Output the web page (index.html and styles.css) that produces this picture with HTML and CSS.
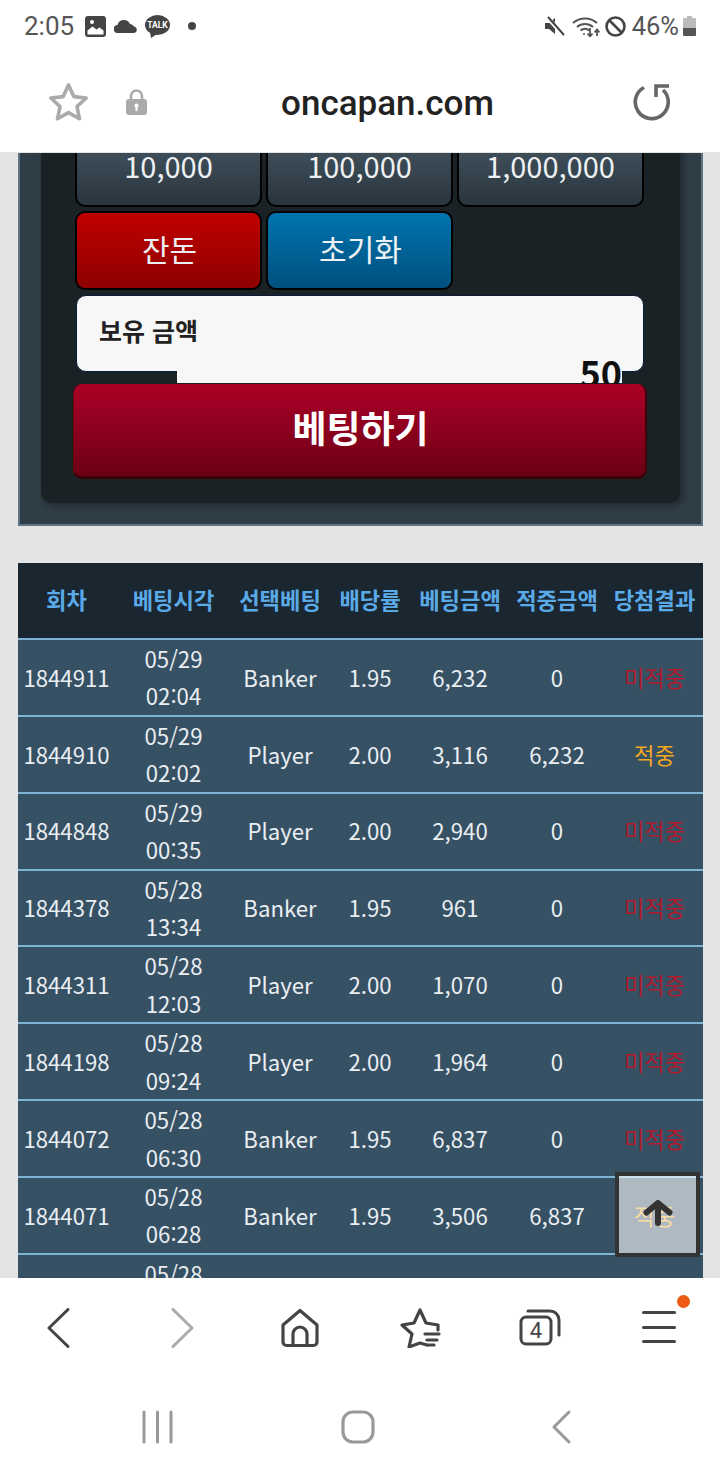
FILE: index.html
```html
<!DOCTYPE html>
<html lang="ko">
<head>
<meta charset="utf-8">
<title>oncapan.com</title>
<link rel="stylesheet" href="styles.css">
</head>
<body>
<div class="phone">
  <header class="status">
    <div class="status-left">
      <span class="status-time">2:05</span>
      <svg class="ic-image" viewBox="0 0 21 21"><rect width="21" height="21" rx="3" fill="#444"/><path d="M2.500 18.500v-4l5-4 4 3 3-2 4 3v4z" fill="#fff"/><circle cx="7" cy="6" r="2" fill="#fff"/></svg>
      <svg class="ic-cloud" viewBox="0 0 24 13"><path d="M4 13a4 4 0 0 1-.5-8A6 6 0 0 1 10 0a7 7 0 0 1 6 4 4.600 4.600 0 0 1 4 2.500 3.300 3.300 0 0 1 0 6.500z" fill="#444"/></svg>
      <svg class="ic-talk" viewBox="0 0 25 23"><ellipse cx="12.500" cy="10" rx="12.500" ry="10" fill="#444"/><path d="M5 17l1 6 6-4z" fill="#444"/><text x="12.500" y="13" text-anchor="middle" class="talk-text">TALK</text></svg>
      <span class="status-dot"></span>
    </div>
    <div class="status-right">
      <svg class="ic-mute" viewBox="0 0 20 20"><path d="M0 7h4l6-5v16l-6-5H0z" fill="#444"/><path d="M2 1l16 18" stroke="#fff" stroke-width="4"/><path d="M3 1l16 18" stroke="#444" stroke-width="2"/></svg>
      <svg class="ic-wifi" viewBox="0 0 28 21" fill="none" stroke="#555" stroke-width="2"><path d="M1 7a18 18 0 0 1 24 0"/><path d="M5 11a12 12 0 0 1 16 0"/><path d="M8.500 14.500a7 7 0 0 1 9 0"/><circle cx="12" cy="18" r="1" fill="#555" stroke="none"/><path d="M18 12v8M15.500 17.500l2.500 3 2.500-3M25 20v-6M22.500 16.500l2.500-3 2.500 3" stroke-width="1.800"/></svg>
      <svg class="ic-block" viewBox="0 0 21 21" fill="none" stroke="#444" stroke-width="2.600"><circle cx="10.500" cy="10.500" r="9"/><path d="M4 4l13 13"/></svg>
      <span class="status-batt">46%</span>
      <svg class="ic-batt" viewBox="0 0 13 20"><path d="M4 0h5v2h3a1 1 0 0 1 1 1v5H0V3a1 1 0 0 1 1-1h3z" fill="#bbb"/><rect y="8" width="13" height="4" fill="#bbb"/><path d="M0 12h13v7a1 1 0 0 1-1 1H1a1 1 0 0 1-1-1z" fill="#555"/></svg>
    </div>
  </header>

  <div class="addr">
    <svg class="ic-star" viewBox="0 0 41 40"><path d="M20.500 3l5.300 11.600 12.400 1.400-9.200 8.500 2.500 12.300-11-6.200-11 6.200 2.500-12.300L2.800 16l12.400-1.400z" fill="none" stroke="#aaa" stroke-width="3.600" stroke-linejoin="round"/></svg>
    <svg class="ic-lock" viewBox="0 0 21 26"><path d="M5 12V7a5.500 5.500 0 0 1 11 0v5" fill="none" stroke="#aaa" stroke-width="2.600"/><rect y="10" width="21" height="16" rx="3" fill="#aaa"/><circle cx="10.500" cy="16.500" r="2" fill="#fff"/><rect x="9.500" y="17" width="2" height="5" fill="#fff"/></svg>
    <div class="url">oncapan.com</div>
    <svg class="ic-reload" viewBox="0 0 38 38" fill="none" stroke="#666" stroke-width="3.600"><path d="M12 4.500a16.500 16.500 0 1 0 19 2.500"/><path d="M24 14V3h13"/></svg>
  </div>

  <main class="page">
    <div class="scrolled">
      <section class="panel">
        <div class="inner">
          <div class="chips">
            <button class="chip">10,000</button>
            <button class="chip">100,000</button>
            <button class="chip">1,000,000</button>
            <button class="chip chip-red">잔돈</button>
            <button class="chip chip-blue">초기화</button>
          </div>
          <div class="balance">
            <div class="balance-label">보유 금액</div>
            <div class="balance-input">50</div>
          </div>
          <button class="bet">베팅하기</button>
        </div>
      </section>

      <table class="history">
        <colgroup>
          <col class="c1"><col class="c2"><col class="c3"><col class="c4"><col class="c5"><col class="c6"><col class="c7">
        </colgroup>
        <thead>
          <tr><th>회차</th><th>베팅시각</th><th>선택베팅</th><th>배당률</th><th>베팅금액</th><th>적중금액</th><th>당첨결과</th></tr>
        </thead>
        <tbody>
          <tr><td>1844911</td><td>05/29<br>02:04</td><td>Banker</td><td>1.95</td><td>6,232</td><td>0</td><td class="miss">미적중</td></tr>
          <tr><td>1844910</td><td>05/29<br>02:02</td><td>Player</td><td>2.00</td><td>3,116</td><td>6,232</td><td class="hit">적중</td></tr>
          <tr><td>1844848</td><td>05/29<br>00:35</td><td>Player</td><td>2.00</td><td>2,940</td><td>0</td><td class="miss">미적중</td></tr>
          <tr><td>1844378</td><td>05/28<br>13:34</td><td>Banker</td><td>1.95</td><td>961</td><td>0</td><td class="miss">미적중</td></tr>
          <tr><td>1844311</td><td>05/28<br>12:03</td><td>Player</td><td>2.00</td><td>1,070</td><td>0</td><td class="miss">미적중</td></tr>
          <tr><td>1844198</td><td>05/28<br>09:24</td><td>Player</td><td>2.00</td><td>1,964</td><td>0</td><td class="miss">미적중</td></tr>
          <tr><td>1844072</td><td>05/28<br>06:30</td><td>Banker</td><td>1.95</td><td>6,837</td><td>0</td><td class="miss">미적중</td></tr>
          <tr><td>1844071</td><td>05/28<br>06:28</td><td>Banker</td><td>1.95</td><td>3,506</td><td>6,837</td><td class="hit">적중</td></tr>
          <tr><td></td><td>05/28<br>&nbsp;</td><td></td><td></td><td></td><td></td><td></td></tr>
        </tbody>
      </table>
    </div>
    <button class="to-top" aria-label="맨 위로">
      <svg class="ic-up" viewBox="0 0 30 26" fill="none" stroke="#333" stroke-width="6" stroke-linecap="round" stroke-linejoin="round"><path d="M15 23V4M3.500 12.500L15 3l11.500 9.500"/></svg>
    </button>
  </main>

  <nav class="toolbar">
    <svg class="ic-nav" viewBox="0 0 42 40" fill="none" stroke="#444" stroke-width="3" stroke-linecap="round" stroke-linejoin="round"><path d="M29 1.500L10 20l19 18.500"/></svg>
    <svg class="ic-nav" viewBox="0 0 42 40" fill="none" stroke="#aaa" stroke-width="3" stroke-linecap="round" stroke-linejoin="round"><path d="M14 1.500L33 20 14 38.500"/></svg>
    <svg class="ic-nav" viewBox="0 0 42 40" fill="none" stroke="#444" stroke-width="3.200" stroke-linejoin="round"><path d="M21 2.500L38 17v17a3.500 3.500 0 0 1-3.500 3.500h-27A3.500 3.500 0 0 1 4 34V17z"/><path d="M14 37V26a7 7 0 0 1 14 0v11"/></svg>
    <svg class="ic-nav" viewBox="0 0 42 40" fill="none" stroke="#444" stroke-width="3.200" stroke-linecap="round" stroke-linejoin="round"><path d="M28 37l-7-2-11 4 3-13-10-9 12-2 6-13 6 13 12 2v5"/><path d="M26 26h14M28 32h10M29 37h6"/></svg>
    <svg class="ic-nav ic-tabs" viewBox="0 0 42 40"><rect x="2" y="9" width="30" height="27" rx="5" fill="none" stroke="#444" stroke-width="3"/><path d="M9 3h22a9 9 0 0 1 9 9v15" fill="none" stroke="#444" stroke-width="3" stroke-linecap="round"/><text x="17" y="30" text-anchor="middle" class="tabs-text">4</text></svg>
    <div class="menu">
      <span class="menu-line"></span><span class="menu-line"></span><span class="menu-line"></span>
      <span class="menu-dot"></span>
    </div>
  </nav>

  <div class="sysnav">
    <svg class="ic-sys ic-sys-recents" viewBox="0 0 32 34" fill="none" stroke="#999" stroke-width="3" stroke-linecap="round"><path d="M2 2v30M15.500 2v30M29 2v30"/></svg>
    <svg class="ic-sys ic-sys-home" viewBox="0 0 34 34" fill="none" stroke="#999" stroke-width="3.200"><rect x="2" y="2" width="30" height="30" rx="10"/></svg>
    <svg class="ic-sys ic-sys-back" viewBox="0 0 20 34" fill="none" stroke="#999" stroke-width="3" stroke-linecap="round" stroke-linejoin="round"><path d="M18 2L3 17l15 15"/></svg>
  </div>
</div>
</body>
</html>
```
FILE: styles.css
```css
* { box-sizing: border-box; }
html, body { margin: 0; padding: 0; }
body { background: #fff; font-family: "Noto Sans CJK KR", "Noto Sans", sans-serif; }

.phone { width: 720px; height: 1480px; display: flex; flex-direction: column; overflow: hidden; position: relative; background: #fff; }

/* status bar */
.status { height: 52px; flex: none; display: flex; justify-content: space-between; align-items: center; padding: 0 24px; }
.status-left, .status-right { display: flex; align-items: center; }
.status-time, .status-batt { font-family: Roboto, sans-serif; font-size: 26px; color: #555; }
.status-batt { font-size: 25.500px; }
.ic-image { width: 21px; height: 21px; margin-left: 11px; }
.ic-cloud { width: 24px; height: 13px; margin-left: 8px; }
.ic-talk { width: 25px; height: 23px; margin-left: 7px; }
.talk-text { font-family: Roboto, sans-serif; font-size: 8.500px; font-weight: 700; fill: #fff; }
.status-dot { width: 8px; height: 8px; border-radius: 50%; background: #444; margin-left: 18px; }
.ic-mute { width: 20px; height: 20px; }
.ic-wifi { width: 28px; height: 21px; margin-left: 7px; }
.ic-block { width: 21px; height: 21px; margin-left: 5px; }
.status-batt { margin-left: 6px; }
.ic-batt { width: 13px; height: 20px; margin-left: 4px; }

/* address bar */
.addr { height: 100px; flex: none; display: flex; align-items: center; padding: 0 50px 0 48px; }
.ic-star { width: 41px; height: 40px; flex: none; }
.ic-lock { width: 21px; height: 26px; flex: none; margin-left: 37px; }
.url { flex: 1; text-align: center; font-family: Roboto, sans-serif; font-weight: 500; font-size: 35px; color: #222; margin: 3px 20px 0 16px; }
.ic-reload { width: 38px; height: 38px; flex: none; }

/* page */
.page { height: 1126px; flex: none; position: relative; overflow: hidden; background: #e4e4e4; border-top: 1px solid #e4e4e4; }
.scrolled { margin-top: -60px; padding: 0 17px 0 18px; }

.panel { background: #2f3d47; border: 2px solid #5e7484; border-top: 0; padding: 35px 21px 21px; }
.inner { background: #1b2226; border-radius: 0 0 10px 10px; box-shadow: 3px 3px 6px rgba(0,0,0,.3); padding: 0 34px 24px; }

.chips { display: grid; grid-template-columns: repeat(3, 187px); gap: 4px; }
.chip { height: 79px; border: 2px solid #000; border-radius: 10px; color: #eef1f3; font-family: inherit; font-size: 29px; font-weight: 400; background: linear-gradient(#465865, #2a353d); padding: 0 0 5px; }
.chip-red { background: linear-gradient(#c00000, #8e0000); font-size: 30px; padding-left: 2px; }
.chip-blue { background: linear-gradient(#0074ae, #00507f); font-size: 30px; padding-left: 2px; }

.balance { height: 77px; margin: 5px 0 12px 1px; width: 568px; background: #f7f7f7; border: 1px solid #0c1a3c; border-radius: 10px; position: relative; display: flex; flex-direction: column; }
.balance-label { font-size: 25px; font-weight: 700; color: #222; line-height: 34px; padding: 17px 0 0 22px; height: 46px; flex: none; }
.balance-input { width: 445px; height: 41px; margin-left: 100px; flex: none; background: #f7f7f7; color: #111; font-weight: 700; font-size: 36px; line-height: 60px; text-align: right; }

.bet { display: block; width: 574px; height: 95px; margin: 0 -3px 0 -2px; position: relative; border: 0; border-bottom: 3px solid #3c000a; border-left: 1px solid #600; border-right: 2px solid #40000c; border-radius: 9px; color: #fff; font-family: inherit; font-weight: 700; font-size: 37px; background: linear-gradient(#ab0026, #6c0015); padding: 0 0 6px 2px; }

/* history */
.history { width: 685px; margin-top: 37px; border-collapse: separate; border-spacing: 0; table-layout: fixed; background: #365064; color: #e9eef2; font-size: 22.200px; text-align: center; }
.c1 { width: 97px; } .c2 { width: 117px; } .c3 { width: 96px; } .c4 { width: 84px; } .c5 { width: 96px; } .c6 { width: 98px; } .c7 { width: 97px; }
.history th { height: 77px; padding: 0 0 4px; background: #1a2630; color: #5aaae8; font-weight: 700; font-size: 22.200px; white-space: nowrap; border-bottom: 2px solid #7fb4d6; }
.history td { height: 76.860px; padding: 0; line-height: 37.400px; border-bottom: 2px solid #7fb4d6; white-space: nowrap; }
.history .miss { color: #b01a2c; }
.history .hit { color: #f2a71f; }

.to-top { position: absolute; left: 615px; top: 1019px; width: 85px; height: 85px; border: 4px solid #333; background: rgba(255,255,255,.6); padding: 0; display: flex; align-items: center; justify-content: center; }
.ic-up { width: 30px; height: 26px; margin-bottom: 4px; }

/* browser toolbar */
.toolbar { height: 100px; flex: none; display: grid; grid-template-columns: repeat(6, 120px); padding: 30px 0 0; align-items: start; justify-items: center; }
.ic-nav { width: 42px; height: 40px; }
.tabs-text { font-family: Roboto, sans-serif; font-size: 22px; fill: #444; }
.menu { width: 34px; height: 32px; display: flex; flex-direction: column; justify-content: space-between; position: relative; margin: 3px 0 0 -3px; }
.menu-line { display: block; height: 3px; background: #444; border-radius: 2px; }
.menu-dot { position: absolute; right: -14px; top: -16px; width: 13px; height: 13px; border-radius: 50%; background: #ec5a14; }

/* system nav */
.sysnav { flex: 1; display: flex; padding: 32px 0 0 0; align-items: flex-start; }
.ic-sys { flex: none; }
.ic-sys-recents { width: 32px; height: 34px; margin-left: 142px; }
.ic-sys-home { width: 34px; height: 34px; margin-left: 167px; }
.ic-sys-back { width: 20px; height: 34px; margin-left: 176px; }
```
